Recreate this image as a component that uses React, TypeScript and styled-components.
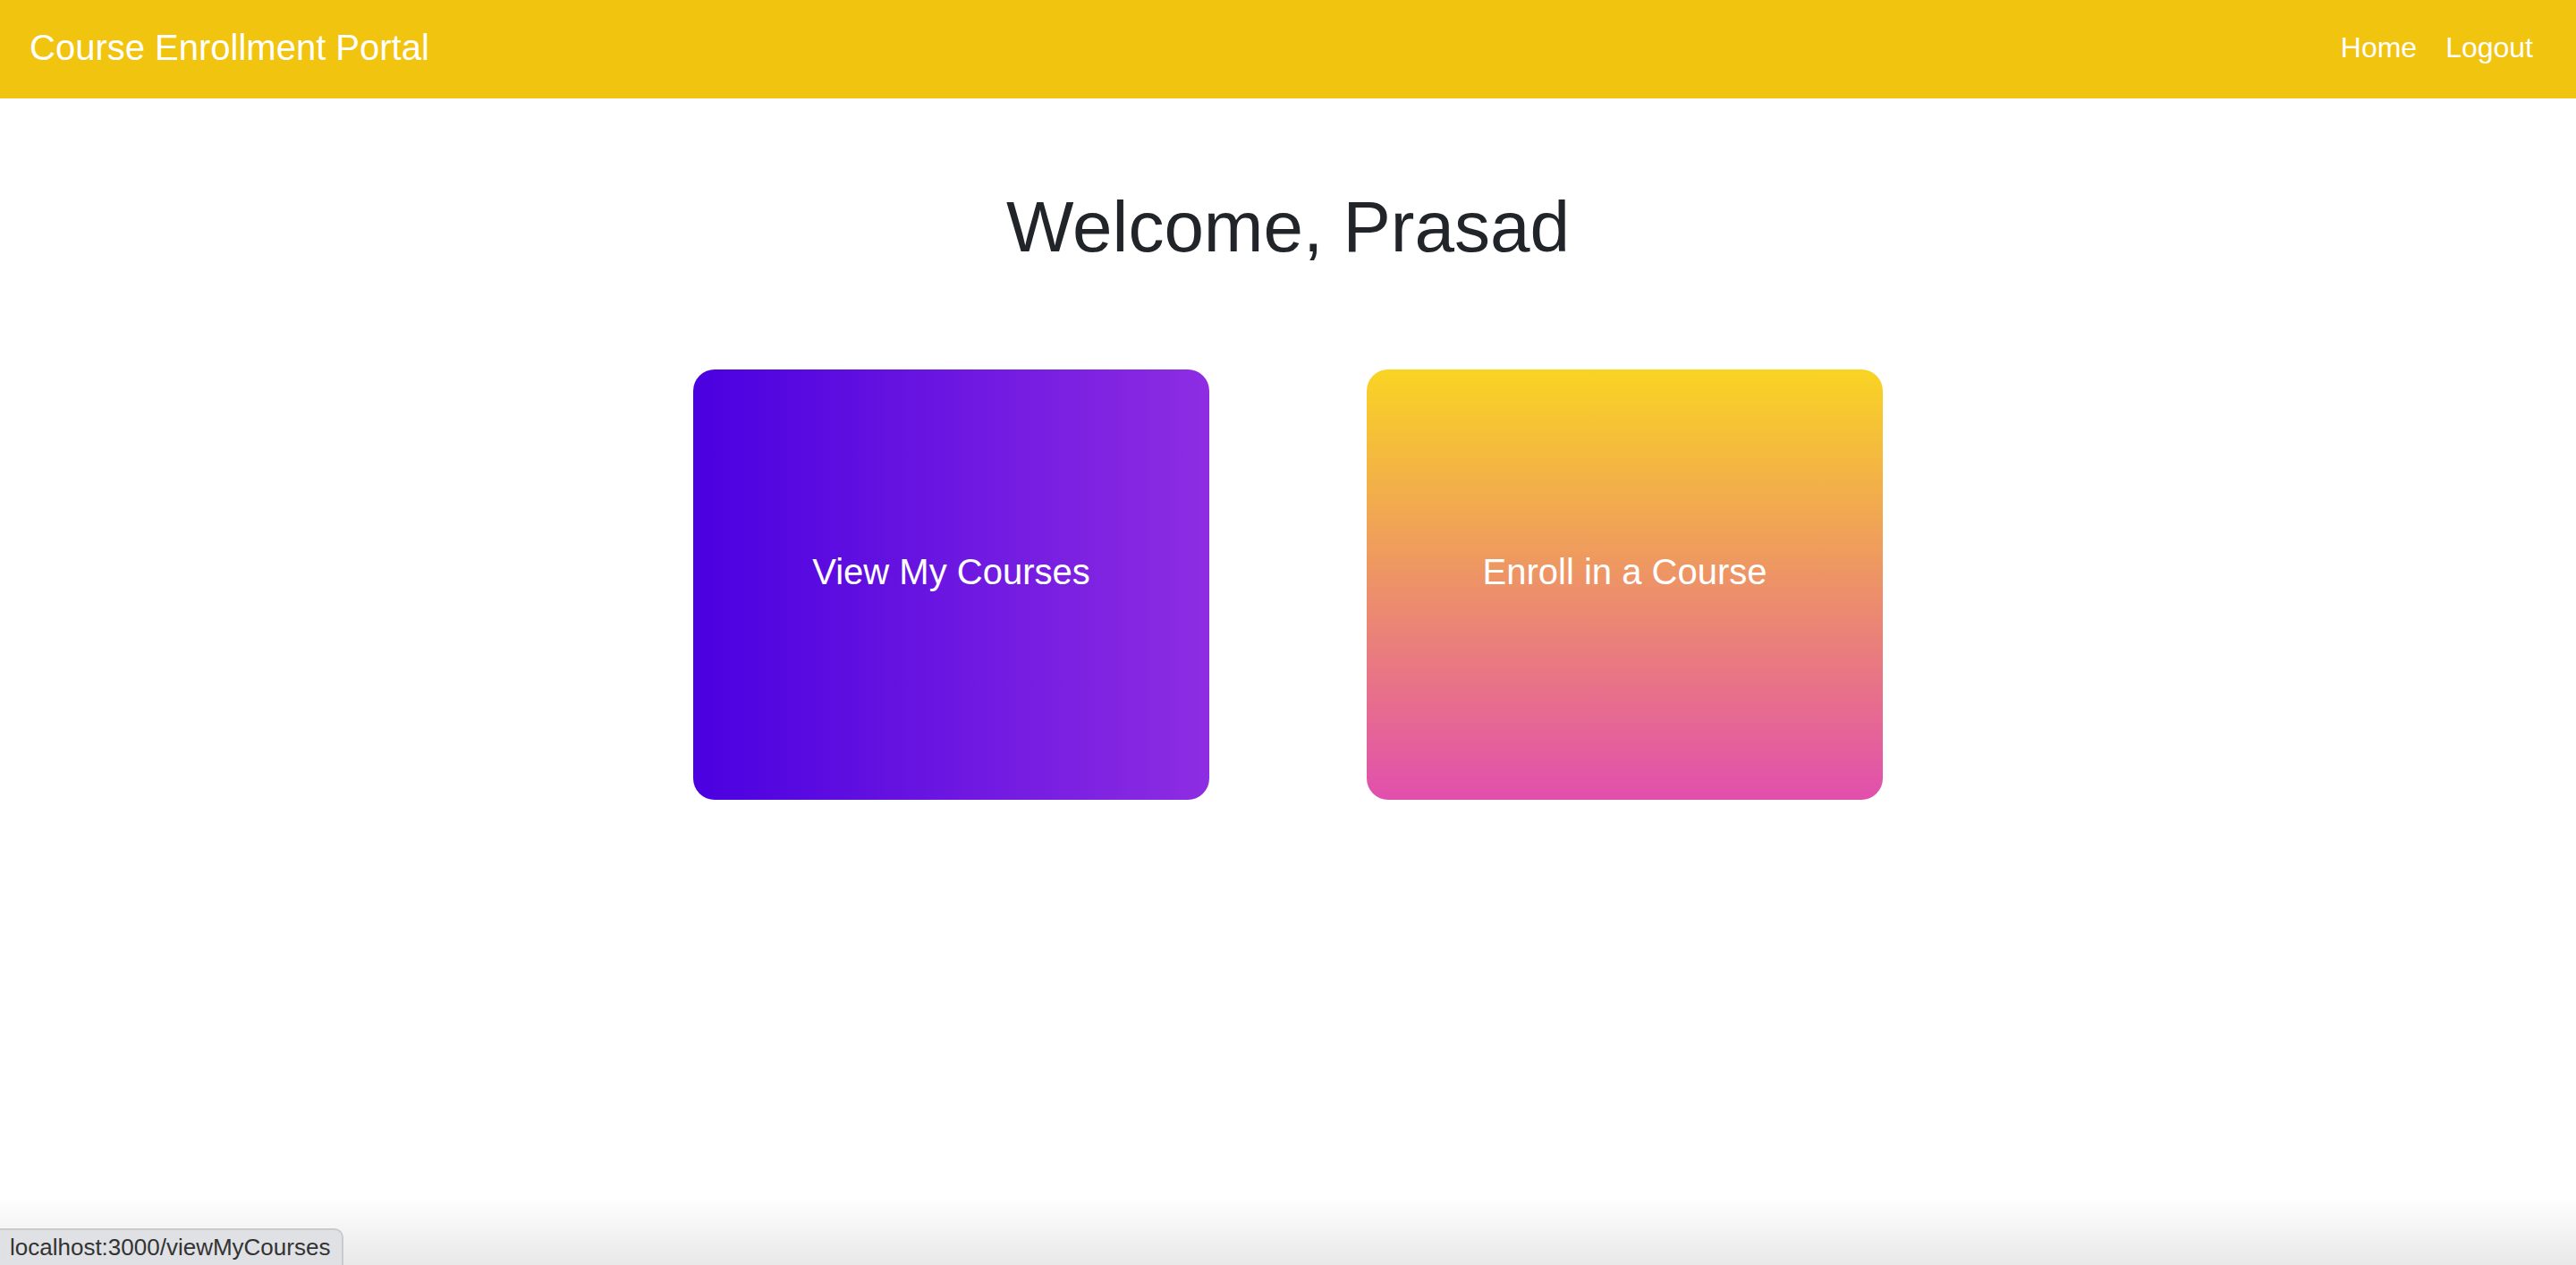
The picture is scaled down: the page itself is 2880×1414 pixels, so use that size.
import React from "react";
import styled, { createGlobalStyle } from "styled-components";

const GlobalStyle = createGlobalStyle`
  html, body {
    margin: 0;
    padding: 0;
    background: #ffffff;
  }
  body {
    font-family: "Liberation Sans", Arial, Helvetica, sans-serif;
    color: #212529;
    min-height: 1414px;
  }
  * { box-sizing: border-box; }
`;

const Navbar = styled.nav`
  height: 110px;
  background: #f1c40f;
  display: flex;
  align-items: center;
  justify-content: space-between;
  padding: 0 32px 4px 33px;
`;

const Brand = styled.a`
  font-size: 40px;
  color: #ffffff;
  text-decoration: none;
  line-height: 1.2;
`;

const NavLinks = styled.div`
  display: flex;
  align-items: center;
`;

const NavLink = styled.a`
  font-size: 32px;
  color: #ffffff;
  text-decoration: none;
  padding: 0 16px;
  line-height: 1.5;
`;

const Main = styled.main`
  display: flex;
  flex-direction: column;
  align-items: center;
`;

const Heading = styled.h1`
  margin: 96px 0 16px;
  font-size: 80px;
  font-weight: 400;
  line-height: 1.2;
  color: #212529;
  text-align: center;
`;

const CardRow = styled.div`
  display: flex;
  justify-content: center;
  gap: 176px;
  margin-top: 95px;
`;

const Card = styled.a<{ $bg: string }>`
  width: 577px;
  height: 481px;
  border-radius: 24px;
  background: ${(p) => p.$bg};
  display: flex;
  align-items: center;
  justify-content: center;
  padding-bottom: 28px;
  color: #ffffff;
  font-size: 40px;
  text-decoration: none;
  cursor: pointer;
`;

const BottomShade = styled.div`
  position: fixed;
  left: 0;
  right: 0;
  bottom: 0;
  height: 76px;
  background: linear-gradient(to bottom, rgba(0, 0, 0, 0), rgba(0, 0, 0, 0.09));
  pointer-events: none;
`;

const StatusBubble = styled.div`
  position: fixed;
  left: 0;
  bottom: 0;
  height: 41px;
  padding: 0 13px 0 11px;
  display: flex;
  align-items: center;
  background: #dfe1e4;
  border: 2px solid #c9cacc;
  border-left: none;
  border-bottom: none;
  border-top-right-radius: 10px;
  font-size: 26px;
  color: #333333;
  z-index: 2;
`;

export default function App() {
  return (
    <>
      <GlobalStyle />
      <Navbar>
        <Brand>Course Enrollment Portal</Brand>
        <NavLinks>
          <NavLink>Home</NavLink>
          <NavLink>Logout</NavLink>
        </NavLinks>
      </Navbar>
      <Main>
        <Heading>Welcome, Prasad</Heading>
        <CardRow>
          <Card $bg="linear-gradient(to right, #4a00e0, #8e2de2)">View My Courses</Card>
          <Card $bg="linear-gradient(to bottom, #f9d423, #e14fad)">Enroll in a Course</Card>
        </CardRow>
      </Main>
      <BottomShade />
      <StatusBubble>localhost:3000/viewMyCourses</StatusBubble>
    </>
  );
}
